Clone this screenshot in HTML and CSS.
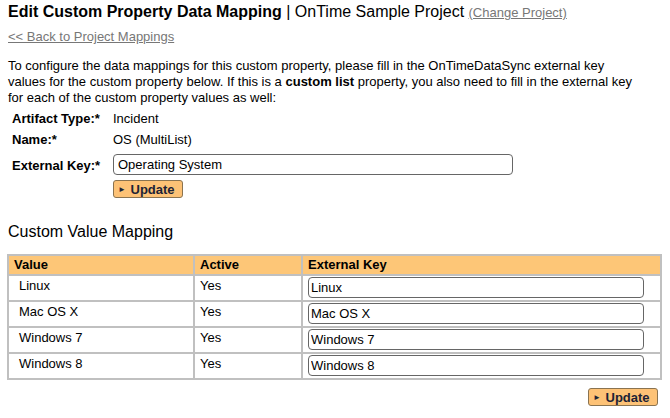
FILE: index.html
```html
<!DOCTYPE html>
<html>
<head>
<meta charset="utf-8">
<link rel="stylesheet" href="styles.css">
</head>
<body>
<div class="page">
  <h1 class="title"><b>Edit Custom Property Data Mapping</b> | OnTime Sample Project <a class="small-link" href="#">(Change Project)</a></h1>
  <a class="back" href="#">&lt;&lt; Back to Project Mappings</a>
  <p class="intro">To configure the data mappings for this custom property, please fill in the OnTimeDataSync external key values for the custom property below. If this is a <b>custom list</b> property, you also need to fill in the external key for each of the custom property values as well:</p>
  <div class="form">
    <div class="label">Artifact Type:*</div><div class="value">Incident</div>
    <div class="label">Name:*</div><div class="value">OS (MultiList)</div>
    <div class="label lk">External Key:*</div><div class="value"><input class="text wide" type="text" value="Operating System"></div>
    <div></div><div><button class="btn"><span class="tri">&#9658;</span> Update</button></div>
  </div>
  <h2 class="sub">Custom Value Mapping</h2>
  <table class="grid">
    <thead>
      <tr><th class="c1">Value</th><th class="c2">Active</th><th class="c3">External Key</th></tr>
    </thead>
    <tbody>
      <tr><td class="name">Linux</td><td>Yes</td><td class="inp"><input class="text cell" type="text" value="Linux"></td></tr>
      <tr><td class="name">Mac OS X</td><td>Yes</td><td class="inp"><input class="text cell" type="text" value="Mac OS X"></td></tr>
      <tr><td class="name">Windows 7</td><td>Yes</td><td class="inp"><input class="text cell" type="text" value="Windows 7"></td></tr>
      <tr><td class="name">Windows 8</td><td>Yes</td><td class="inp"><input class="text cell" type="text" value="Windows 8"></td></tr>
    </tbody>
  </table>
  <div class="foot"><button class="btn"><span class="tri">&#9658;</span> Update</button></div>
</div>
</body>
</html>
```
FILE: styles.css
```css
html, body {
  margin: 0;
  padding: 0;
  background: #fff;
}
body {
  font-family: "Liberation Sans", Arial, sans-serif;
  font-size: 13px;
  color: #000;
}
.page {
  padding: 2px 8px 0 8px;
}
.title {
  font-size: 16px;
  font-weight: normal;
  margin: 0;
  line-height: 19px;
}
.small-link {
  font-size: 13px;
  color: #777;
}
.back {
  display: block;
  margin-top: 7px;
  color: #777;
  font-size: 13px;
  line-height: 15px;
}
.intro {
  margin: 14px 0 0 0;
  line-height: 16px;
  width: 636px;
}
.form {
  display: grid;
  grid-template-columns: 101px 400px;
  row-gap: 0;
  margin-top: 2px;
  padding-left: 4px;
}
.label {
  font-weight: bold;
  line-height: 21px;
}
.value {
  line-height: 21px;
}
.lk { padding-top: 5px; }
.text {
  font-family: "Liberation Sans", Arial, sans-serif;
  font-size: 13px;
  border: 1px solid #666;
  border-radius: 4px;
  box-sizing: border-box;
  height: 21px;
  padding: 0 4px;
  color: #000;
  background: #fff;
}
.wide {
  width: 400px;
  margin-top: 4px;
}
.btn {
  font-family: "Liberation Sans", Arial, sans-serif;
  font-size: 13px;
  font-weight: bold;
  color: #1c2235;
  background: #fdc276;
  border: 1px solid #8a7350;
  border-radius: 3px;
  height: 18px;
  width: 70px;
  padding: 0 0 0 4px;
  margin-top: 4px;
  text-align: left;
  line-height: 15px;
}
.tri {
  font-size: 8px;
  vertical-align: 2px;
  margin-right: 1px;
}
.sub {
  font-size: 16px;
  font-weight: normal;
  margin: 24px 0 0 0;
  line-height: 19px;
}
.grid {
  margin-top: 13px;
  margin-left: -1px;
  border-collapse: collapse;
  width: 655px;
  border: 2px solid #c0c0c0;
}
.grid th, .grid td {
  border: 2px solid #c0c0c0;
  text-align: left;
  vertical-align: top;
}
.grid th {
  background: #fdc677;
  font-weight: bold;
  padding: 0 5px;
  height: 18px;
  line-height: 18px;
}
.c1 { width: 174px; }
.c2 { width: 96px; }
.grid td {
  padding: 2px 5px 0 5px;
  height: 26px;
  box-sizing: border-box;
  line-height: 16px;
}
.grid td.name { padding-left: 10px; }
.grid td.inp { padding: 1px 16px 0 5px; }
.cell {
  width: 100%;
  display: block;
  padding: 0 2px;
}
.foot {
  display: flex;
  justify-content: flex-end;
  width: 650px;
  margin-top: 4px;
}
```
